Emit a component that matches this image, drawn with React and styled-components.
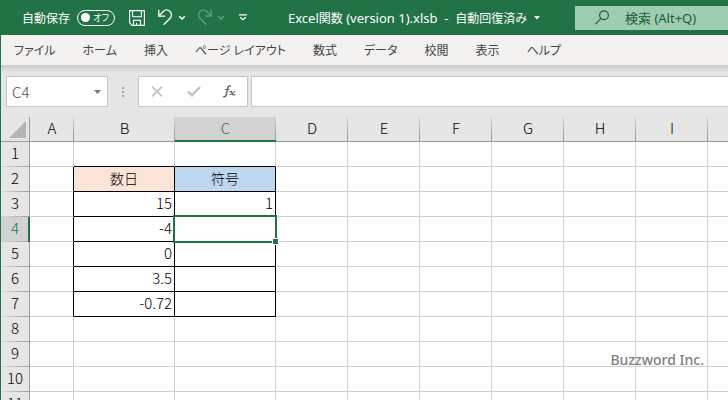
import React, { useEffect, useState } from "react";
import styled, { createGlobalStyle, css } from "styled-components";

const green = "#217346";
const grid = "#d0d0d0";
const uiFont = '"Noto Sans", "Noto Sans CJK JP", sans-serif';
const cellFont = '"Noto Sans CJK JP", "Noto Sans", sans-serif';

const GlobalStyle = createGlobalStyle`
  * { box-sizing: border-box; }
  body { margin: 0; overflow: hidden; }
  button, input { font: inherit; color: inherit; border: 0; padding: 0; margin: 0; background: none; outline: none; }
  svg { display: block; flex: none; }
`;

const Window = styled.div`
  height: 100vh;
  display: flex;
  flex-direction: column;
  overflow: hidden;
  background: #e6e6e6;
  font-family: ${uiFont};
  font-feature-settings: "palt";
  font-size: 12px;
`;

const TitleBar = styled.header`
  flex: none;
  height: 35px;
  display: flex;
  align-items: center;
  background: ${green};
  color: #fff;
  padding-left: 22px;
  white-space: nowrap;
`;

const AutoSave = styled.label`
  display: flex;
  align-items: center;
  gap: 7px;
  width: 107px;
`;

const Toggle = styled.button`
  width: 38px;
  height: 16px;
  border: 1px solid #fff;
  border-radius: 8px;
  display: flex;
  align-items: center;
  justify-content: space-between;
  padding: 0 5px 0 3px;
  font-size: 9px;
  line-height: 14px;
`;

const Knob = styled.span`
  width: 9px;
  height: 9px;
  border-radius: 50%;
  background: #fff;
`;

const QuickAccess = styled.div`
  display: flex;
  align-items: center;
  width: 159px;
`;

const IconButton = styled.button`
  width: ${(p) => p.$width}px;
  height: 24px;
  display: flex;
  align-items: center;
  opacity: ${(p) => (p.$faded ? 0.3 : 1)};
`;

const FileName = styled.button`
  display: flex;
  align-items: center;
  gap: 7px;
  width: 287px;
`;

const FileText = styled.span`
  white-space: pre;
`;

const Latin = styled.span`
  font-size: 13px;
`;

const Search = styled.label`
  flex: 1;
  min-width: 0;
  height: 24px;
  display: flex;
  align-items: center;
  gap: 16px;
  padding-left: 20px;
  background: #9fcdb1;
  color: #185c37;
  font-size: 13px;
`;

const SearchInput = styled.input`
  flex: 1;
  min-width: 0;
  &::placeholder { color: #185c37; opacity: 1; }
`;

const Workspace = styled.main`
  flex: 1;
  min-height: 0;
  display: flex;
  flex-direction: column;
  border-left: 1px solid ${green};
`;

const Menu = styled.nav`
  flex: none;
  height: 30px;
  display: flex;
  align-items: center;
  gap: 27px;
  padding-left: 13px;
  background: #f3f2f1;
  color: #444;
  font-size: 12px;
`;

const MenuItem = styled.button`
  white-space: nowrap;
`;

const FormulaBar = styled.div`
  flex: none;
  height: 52px;
  display: flex;
  align-items: flex-start;
  padding: 11px 0 0 5px;
  background: linear-gradient(#cacaca, #e6e6e6 8px);
`;

const NameBox = styled.div`
  width: 102px;
  height: 31px;
  display: flex;
  align-items: center;
  padding: 0 6px 0 5px;
  border: 1px solid #c6c6c6;
  background: #fff;
  color: #444;
  font-family: ${cellFont};
  font-size: 15px;
  font-weight: 300;
`;

const NameInput = styled.input`
  flex: 1;
  min-width: 0;
`;

const Grip = styled.div`
  width: 30px;
  height: 31px;
  display: flex;
  flex-direction: column;
  align-items: center;
  justify-content: center;
  gap: 2px;
`;

const GripDot = styled.span`
  width: 2px;
  height: 2px;
  background: #a6a6a6;
`;

const EntryButtons = styled.div`
  width: 110px;
  height: 31px;
  display: flex;
  align-items: center;
  justify-content: space-between;
  padding: 0 11px 0 12px;
  margin-right: 3px;
  border: 1px solid #c6c6c6;
  background: #fff;
`;

const FormulaInput = styled.input`
  flex: 1;
  min-width: 0;
  height: 31px;
  border: 1px solid #c6c6c6;
  border-right: 0;
  background: #fff;
  padding: 0 6px;
`;

const SheetArea = styled.div`
  flex: 1;
  min-height: 0;
  position: relative;
  overflow: hidden;
`;

const Sheet = styled.table`
  width: max-content;
  table-layout: fixed;
  border-spacing: 0;
  background: #fff;
  font-family: ${cellFont};
  font-feature-settings: normal;
  font-size: 15px;
  font-weight: 300;
  line-height: 20px;
  color: #000;
`;

const Col = styled.col`
  width: ${(p) => p.$width}px;
`;

const Corner = styled.td`
  padding: 0 3px 3px 0;
  background: #e6e6e6;
  border-right: 1px solid #9b9b9b;
  border-bottom: 1px solid #9b9b9b;
  vertical-align: bottom;
  svg { margin-left: auto; }
`;

const header = css`
  height: 25px;
  padding: 0 0 3px;
  font-weight: 300;
  text-align: center;
  color: ${(p) => (p.$active ? green : "#000")};
`;

const ColumnHeader = styled.th`
  ${header}
  background: linear-gradient(#d0d0d0, #959595) right / 1px 100% no-repeat ${(p) => (p.$active ? "#d2d2d2" : "#e6e6e6")};
  border-bottom: 1px solid ${(p) => (p.$active ? green : "#9b9b9b")};
  box-shadow: ${(p) => (p.$active ? `inset 0 -1px ${green}` : "none")};
`;

const RowHeader = styled.th`
  ${header}
  background: linear-gradient(90deg, #d8d8d8, #a0a0a0) bottom / 100% 1px no-repeat ${(p) => (p.$active ? "#d2d2d2" : "#e6e6e6")};
  border-right: 1px solid ${(p) => (p.$active ? green : "#9b9b9b")};
  box-shadow: ${(p) => (p.$active ? `inset -1px 0 ${green}` : "none")};
`;

const Cell = styled.td`
  position: relative;
  height: 25px;
  padding: 0 2px 3px;
  font-size: ${(p) => (p.$fill ? 14 : 15)}px;
  text-align: ${(p) => (p.$fill ? "center" : "right")};
  background: ${(p) => p.$fill || "#fff"};
  background-clip: padding-box;
  border-right: 1px solid ${(p) => (p.$rightInk ? "#000" : grid)};
  border-bottom: 1px solid ${(p) => (p.$bottomInk ? "#000" : grid)};
`;

const Selection = styled.div`
  position: absolute;
  inset: -2px;
  z-index: 1;
  border: 2px solid ${green};
`;

const FillHandle = styled.span`
  position: absolute;
  right: -3px;
  bottom: -3px;
  width: 5px;
  height: 5px;
  background: ${green};
  box-shadow: 0 0 0 1px #fff;
`;

const Credit = styled.div`
  position: absolute;
  right: 24px;
  bottom: 30px;
  font-family: "Noto Sans", sans-serif;
  font-size: 14px;
  line-height: 20px;
  font-weight: 500;
  color: #808080;
`;

const Chevron = () => (
  <svg width="8" height="6" viewBox="0 0 8 6" fill="none" stroke="#fff" strokeWidth="1.5">
    <path d="M1.2 1.2 4 4l2.8-2.8" />
  </svg>
);

const SaveIcon = () => (
  <svg width="16" height="16" viewBox="0 0 16 16" fill="none" stroke="#fff" strokeWidth="1.1">
    <path d="M.6.6h14.8v14.8H3.2L.6 12.8zM3.6.6v6.2h8.8V.6M4.5 15.4v-5h7v5M7.5 15.4v-2.6" />
  </svg>
);

const UndoIcon = () => (
  <svg width="15" height="17" viewBox="0 0 15 17" fill="none" stroke="#fff" strokeWidth="1.3">
    <path d="M.8.8v6.4h6.4M1 7 5.2 2.5C7.2.6 10 .6 11.8 2.2c2.2 2 2.2 5 .3 7L5.6 15.8" />
  </svg>
);

const RedoIcon = () => (
  <svg width="15" height="17" viewBox="0 0 15 17" fill="none" stroke="#fff" strokeWidth="1.3">
    <path d="M14.2.8v6.4H7.8M14 7 9.8 2.5C7.8.6 5 .6 3.2 2.2 1 4.2 1 7.2 2.9 9.2l6.5 6.6" />
  </svg>
);

const menuItems = ["ファイル", "ホーム", "挿入", "ページ レイアウト", "数式", "データ", "校閲", "表示", "ヘルプ"];
const letters = "ABCDEFGHIJKLMNOPQRSTUVWXYZ".split("");
const columnWidths = { A: 44, B: 101, C: 101 };
const values = {
  B2: "数日", C2: "符号", B3: "15", C3: "1", B4: "-4", B5: "0", B6: "3.5", B7: "-0.72",
};
const fills = { B2: "#fce4d6", C2: "#bdd7ee" };
const active = { column: "C", row: 4 };

const hasRightInk = (c, r) => r >= 2 && r <= 7 && "ABC".includes(c);
const hasBottomInk = (c, r) => r >= 1 && r <= 7 && "BC".includes(c);

// Only the rows and columns that reach into the window are rendered.
const visibleRange = () => ({
  columns: letters.slice(0, 3 + Math.max(1, Math.ceil((window.innerWidth - 276) / 72))),
  rows: Array.from({ length: Math.max(8, Math.ceil((window.innerHeight - 142) / 25)) }, (_, i) => i + 1),
});

function useVisibleRange() {
  const [range, setRange] = useState(visibleRange);
  useEffect(() => {
    const update = () => setRange(visibleRange());
    window.addEventListener("resize", update);
    return () => window.removeEventListener("resize", update);
  }, []);
  return range;
}

export default function App() {
  const { columns, rows } = useVisibleRange();
  return (
    <Window>
      <GlobalStyle />
      <TitleBar>
        <AutoSave>
          自動保存
          <Toggle role="switch" aria-checked="false">
            <Knob />
            オフ
          </Toggle>
        </AutoSave>
        <QuickAccess>
          <IconButton $width={29} aria-label="上書き保存"><SaveIcon /></IconButton>
          <IconButton $width={20} aria-label="元に戻す"><UndoIcon /></IconButton>
          <IconButton $width={19} aria-label="元に戻す履歴"><Chevron /></IconButton>
          <IconButton $width={20} $faded aria-label="やり直し"><RedoIcon /></IconButton>
          <IconButton $width={22} $faded aria-label="やり直し履歴"><Chevron /></IconButton>
          <IconButton $width={20} aria-label="クイック アクセス ツール バーのカスタマイズ">
            <svg width="8" height="7" viewBox="0 0 8 7" fill="none" stroke="#fff" strokeWidth="1.2">
              <path d="M0 .9h8M1.2 3.2 4 5.8l2.8-2.6" />
            </svg>
          </IconButton>
        </QuickAccess>
        <FileName>
          <FileText>
            <Latin>Excel</Latin>関数<Latin>{" (version 1).xlsb  -  "}</Latin>自動回復済み
          </FileText>
          <svg width="6" height="4" viewBox="0 0 6 4" fill="#fff"><path d="M0 0h6L3 3.5z" /></svg>
        </FileName>
        <Search>
          <svg width="14" height="15" viewBox="0 0 14 15" fill="none" stroke="#185c37" strokeWidth="1.2">
            <circle cx="9" cy="5.2" r="4.4" />
            <path d="M5.8 8.6.5 14.2" />
          </svg>
          <SearchInput aria-label="検索" placeholder="検索 (Alt+Q)" />
        </Search>
      </TitleBar>
      <Workspace>
        <Menu>
          {menuItems.map((item) => <MenuItem key={item}>{item}</MenuItem>)}
        </Menu>
        <FormulaBar>
          <NameBox>
            <NameInput aria-label="名前ボックス" defaultValue="C4" />
            <svg width="7" height="4" viewBox="0 0 7 4" fill="#777"><path d="M0 0h7L3.5 4z" /></svg>
          </NameBox>
          <Grip><GripDot /><GripDot /><GripDot /></Grip>
          <EntryButtons>
            <IconButton $width={13} aria-label="キャンセル">
              <svg width="12" height="11" viewBox="0 0 12 11" fill="none" stroke="#c2c2c2" strokeWidth="1.8">
                <path d="m1 .7 10 9.6M11 .7 1 10.3" />
              </svg>
            </IconButton>
            <IconButton $width={14} aria-label="入力">
              <svg width="14" height="11" viewBox="0 0 14 11" fill="none" stroke="#c2c2c2" strokeWidth="2.4">
                <path d="m1 5.4 4 3.9L13 1" />
              </svg>
            </IconButton>
            <IconButton $width={13} aria-label="関数の挿入">
              <svg width="13" height="13" viewBox="0 0 13 13" fill="none" stroke="#666" strokeLinecap="round">
                <path d="M7.4 1.2C6 .3 5.2 1 4.7 3L3.3 9.7c-.4 1.7-1.2 2.4-2.5 1.8" strokeWidth="1.5" />
                <path d="M2.2 4.4h4.2" strokeWidth="1" />
                <path d="M7 6.6c1.2-.5 1.7.1 2.1 1.5.4 1.4 1 2.1 2.4 1.5" strokeWidth="1.4" />
                <path d="M12 6.5c-1.6-.2-3.2 3.5-5.2 3.4" strokeWidth="1" />
              </svg>
            </IconButton>
          </EntryButtons>
          <FormulaInput aria-label="数式バー" />
        </FormulaBar>
        <SheetArea>
          <Sheet>
            <colgroup>
              <Col $width={29} />
              {columns.map((c) => <Col key={c} $width={columnWidths[c] || 72} />)}
            </colgroup>
            <thead>
              <tr>
                <Corner>
                  <svg width="17" height="17" viewBox="0 0 17 17" fill="#b4b4b4"><path d="M17 0v17H0z" /></svg>
                </Corner>
                {columns.map((c) => (
                  <ColumnHeader key={c} scope="col" $active={c === active.column}>{c}</ColumnHeader>
                ))}
              </tr>
            </thead>
            <tbody>
              {rows.map((r) => (
                <tr key={r}>
                  <RowHeader scope="row" $active={r === active.row}>{r}</RowHeader>
                  {columns.map((c) => (
                    <Cell key={c} $fill={fills[c + r]} $rightInk={hasRightInk(c, r)} $bottomInk={hasBottomInk(c, r)}>
                      {values[c + r]}
                      {c === active.column && r === active.row && (
                        <Selection><FillHandle /></Selection>
                      )}
                    </Cell>
                  ))}
                </tr>
              ))}
            </tbody>
          </Sheet>
          <Credit>Buzzword Inc.</Credit>
        </SheetArea>
      </Workspace>
    </Window>
  );
}
